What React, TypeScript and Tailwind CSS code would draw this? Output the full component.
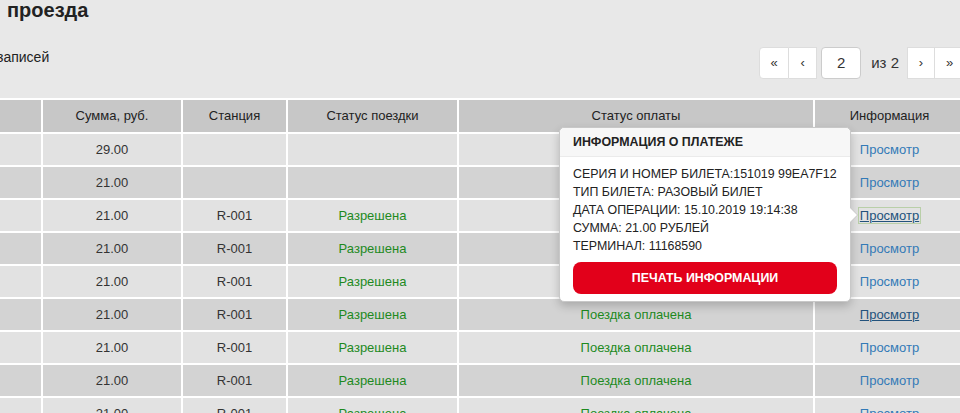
import React from "react";

const rows = [
  { sum: "29.00", station: "", trip: "", pay: "" },
  { sum: "21.00", station: "", trip: "", pay: "" },
  { sum: "21.00", station: "R-001", trip: "Разрешена", pay: "Поездка оплачена" },
  { sum: "21.00", station: "R-001", trip: "Разрешена", pay: "Поездка оплачена" },
  { sum: "21.00", station: "R-001", trip: "Разрешена", pay: "Поездка оплачена" },
  { sum: "21.00", station: "R-001", trip: "Разрешена", pay: "Поездка оплачена" },
  { sum: "21.00", station: "R-001", trip: "Разрешена", pay: "Поездка оплачена" },
  { sum: "21.00", station: "R-001", trip: "Разрешена", pay: "Поездка оплачена" },
  { sum: "21.00", station: "R-001", trip: "Разрешена", pay: "Поездка оплачена" },
];

function Pagination() {
  return (
    <div className="flex items-center h-[32px] text-[13px] text-[#333]">
      <div className="flex h-full">
        <span className="w-[30px] h-full flex items-center justify-center bg-white border border-[#ddd] rounded-l-[4px]">«</span>
        <span className="w-[28px] h-full flex items-center justify-center bg-white border border-l-0 border-[#ddd]">‹</span>
      </div>
      <div className="ml-[4px] w-[40px] h-full flex items-center justify-center bg-white border border-[#ccc] rounded-[4px] text-[15px]">2</div>
      <span className="ml-[10px] text-[15px]">из 2</span>
      <div className="flex h-full ml-[8px]">
        <span className="w-[28px] h-full flex items-center justify-center bg-white border border-[#ddd]">›</span>
        <span className="w-[30px] h-full flex items-center justify-center bg-white border border-l-0 border-[#ddd] rounded-r-[4px]">»</span>
      </div>
    </div>
  );
}

function Popover() {
  return (
    <div className="absolute left-[559px] top-[127px] w-[292px] bg-white border border-[#c8c8c8] rounded-[5px] shadow-[0_4px_10px_rgba(0,0,0,0.2)] text-[12.4px] text-[#222]">
      <div className="h-[29px] px-[13px] flex items-center font-bold bg-[#f7f7f7] border-b border-[#ebebeb] rounded-t-[5px]">
        ИНФОРМАЦИЯ О ПЛАТЕЖЕ
      </div>
      <div className="px-[13px] pt-[8px] pb-[7px]">
        <div className="leading-[18px] whitespace-nowrap">
          <div>СЕРИЯ И НОМЕР БИЛЕТА:151019 99EA7F12</div>
          <div>ТИП БИЛЕТА: РАЗОВЫЙ БИЛЕТ</div>
          <div>ДАТА ОПЕРАЦИИ: 15.10.2019 19:14:38</div>
          <div>СУММА: 21.00 РУБЛЕЙ</div>
          <div>ТЕРМИНАЛ: 11168590</div>
        </div>
        <button className="mt-[7px] w-full h-[32px] rounded-[8px] bg-[#e2001a] text-white font-bold text-[12.4px]">
          ПЕЧАТЬ ИНФОРМАЦИИ
        </button>
      </div>
      <div className="absolute right-[-8px] top-[79px] w-0 h-0 border-y-[8px] border-y-transparent border-l-[8px] border-l-[#c8c8c8]" />
      <div className="absolute right-[-7px] top-[80px] w-0 h-0 border-y-[7px] border-y-transparent border-l-[7px] border-l-white" />
    </div>
  );
}

export default function App() {
  return (
    <div
      className="relative w-[960px] h-[413px] overflow-hidden bg-[#e8e8e8]"
      style={{ fontFamily: '"Liberation Sans", Arial, sans-serif' }}
    >
      <div className="-ml-[100px] w-[1064px]">
        <h1 className="pl-[107px] h-[26px] -mt-[1px] text-[20px] leading-[22px] font-bold text-[#222]">проезда</h1>
        <div className="flex justify-between items-start mt-[22px]">
          <span className="pl-[97px] pt-[1px] text-[14px] leading-[18px] text-[#222]">записей</span>
          <div className="-mr-[1px]">
            <Pagination />
          </div>
        </div>
        <table className="mt-[19px] table-fixed border-collapse w-[1064px] text-[13px] text-center">
          <colgroup>
            <col className="w-[141px]" />
            <col className="w-[140px]" />
            <col className="w-[105px]" />
            <col className="w-[171px]" />
            <col className="w-[356px]" />
            <col className="w-[151px]" />
          </colgroup>
          <thead>
            <tr className="bg-[#c7c7c7] text-[#222]">
              <th className="h-[34px] font-normal border-2 border-white"></th>
              <th className="font-normal border-2 border-white">Сумма, руб.</th>
              <th className="font-normal border-2 border-white">Станция</th>
              <th className="font-normal border-2 border-white">Статус поездки</th>
              <th className="font-normal border-2 border-white">Статус оплаты</th>
              <th className="font-normal border-2 border-white">Информация</th>
            </tr>
          </thead>
          <tbody>
            {rows.map((r, i) => (
              <tr key={i} className={i % 2 === 0 ? "bg-[#e2e2e2] text-[#333]" : "bg-[#d3d3d3] text-[#333]"}>
                <td className="h-[33px] border-2 border-white"></td>
                <td className="border-2 border-white">{r.sum}</td>
                <td className="border-2 border-white">{r.station}</td>
                <td className="border-2 border-white text-[#1e8a1e]">{r.trip}</td>
                <td className="border-2 border-white text-[#1e8a1e]">{r.pay}</td>
                <td className="border-2 border-white">
                  {i === 2 ? (
                    <a className="text-[#23527c] underline outline outline-1 outline-[#b9cfa8] px-[1px]">Просмотр</a>
                  ) : i === 5 ? (
                    <a className="text-[#23527c] underline">Просмотр</a>
                  ) : (
                    <a className="text-[#337ab7]">Просмотр</a>
                  )}
                </td>
              </tr>
            ))}
          </tbody>
        </table>
      </div>
      <Popover />
    </div>
  );
}
